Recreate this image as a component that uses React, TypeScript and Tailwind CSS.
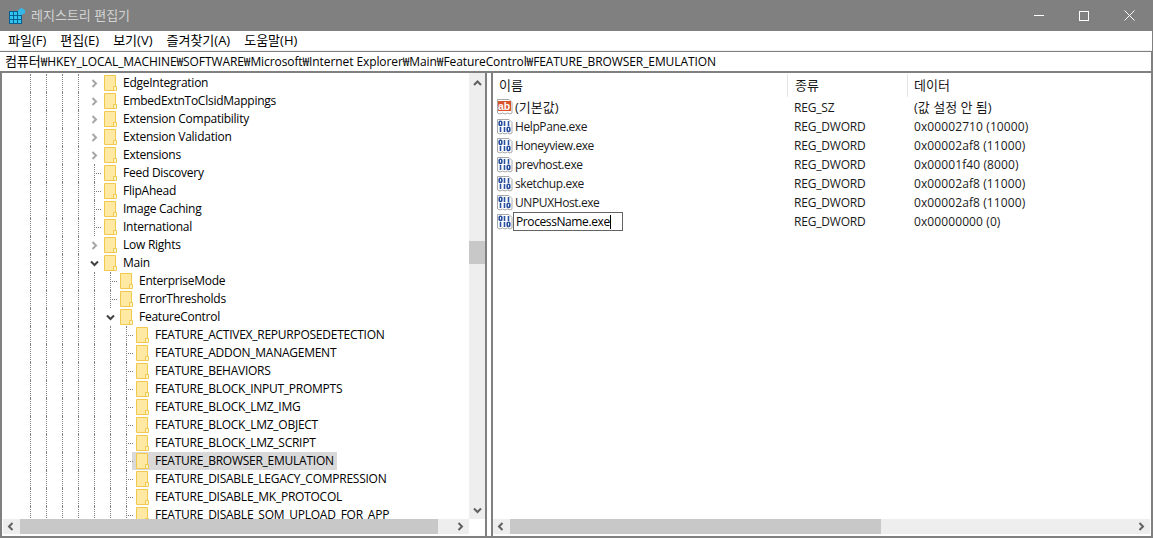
const UI = 'font-["Open_Sans","Noto_Sans_CJK_KR",sans-serif]';

type Node = {
  name: string;
  depth: number; // how many guide columns sit left of the expander
  kind: 'closed' | 'open' | 'leaf';
  selected?: boolean;
};

const tree: Node[] = [
  { name: 'EdgeIntegration', depth: 4, kind: 'closed' },
  { name: 'EmbedExtnToClsidMappings', depth: 4, kind: 'closed' },
  { name: 'Extension Compatibility', depth: 4, kind: 'closed' },
  { name: 'Extension Validation', depth: 4, kind: 'closed' },
  { name: 'Extensions', depth: 4, kind: 'closed' },
  { name: 'Feed Discovery', depth: 4, kind: 'leaf' },
  { name: 'FlipAhead', depth: 4, kind: 'leaf' },
  { name: 'Image Caching', depth: 4, kind: 'leaf' },
  { name: 'International', depth: 4, kind: 'leaf' },
  { name: 'Low Rights', depth: 4, kind: 'closed' },
  { name: 'Main', depth: 4, kind: 'open' },
  { name: 'EnterpriseMode', depth: 5, kind: 'leaf' },
  { name: 'ErrorThresholds', depth: 5, kind: 'leaf' },
  { name: 'FeatureControl', depth: 5, kind: 'open' },
  { name: 'FEATURE_ACTIVEX_REPURPOSEDETECTION', depth: 6, kind: 'leaf' },
  { name: 'FEATURE_ADDON_MANAGEMENT', depth: 6, kind: 'leaf' },
  { name: 'FEATURE_BEHAVIORS', depth: 6, kind: 'leaf' },
  { name: 'FEATURE_BLOCK_INPUT_PROMPTS', depth: 6, kind: 'leaf' },
  { name: 'FEATURE_BLOCK_LMZ_IMG', depth: 6, kind: 'leaf' },
  { name: 'FEATURE_BLOCK_LMZ_OBJECT', depth: 6, kind: 'leaf' },
  { name: 'FEATURE_BLOCK_LMZ_SCRIPT', depth: 6, kind: 'leaf' },
  { name: 'FEATURE_BROWSER_EMULATION', depth: 6, kind: 'leaf', selected: true },
  { name: 'FEATURE_DISABLE_LEGACY_COMPRESSION', depth: 6, kind: 'leaf' },
  { name: 'FEATURE_DISABLE_MK_PROTOCOL', depth: 6, kind: 'leaf' },
  { name: 'FEATURE_DISABLE_SOM_UPLOAD_FOR_APP', depth: 6, kind: 'leaf' },
];

const values = [
  { name: '(기본값)', type: 'REG_SZ', data: '(값 설정 안 됨)', icon: 'sz' },
  { name: 'HelpPane.exe', type: 'REG_DWORD', data: '0x00002710 (10000)', icon: 'bin' },
  { name: 'Honeyview.exe', type: 'REG_DWORD', data: '0x00002af8 (11000)', icon: 'bin' },
  { name: 'prevhost.exe', type: 'REG_DWORD', data: '0x00001f40 (8000)', icon: 'bin' },
  { name: 'sketchup.exe', type: 'REG_DWORD', data: '0x00002af8 (11000)', icon: 'bin' },
  { name: 'UNPUXHost.exe', type: 'REG_DWORD', data: '0x00002af8 (11000)', icon: 'bin' },
];

function Folder() {
  return (
    <svg width="13" height="16" viewBox="0 0 13 16" className="shrink-0">
      <path d="M.5.5h11v15H.5z" fill="#ffe9a3" stroke="#f2c94f" />
      <path d="M9.5 15.5v-4h3v4z" fill="#fff3c8" stroke="#f2c94f" />
    </svg>
  );
}

function Chevron({ dir, color }: { dir: 'left' | 'right' | 'up' | 'down'; color: string }) {
  const d = {
    left: 'M6.5 2 3 5.5 6.5 9',
    right: 'M3.5 2 7 5.5 3.5 9',
    up: 'M2 7 5.5 3.5 9 7',
    down: 'M2 3.5 5.5 7 9 3.5',
  }[dir];
  return (
    <svg width="11" height="11" viewBox="0 0 11 11">
      <path d={d} fill="none" stroke={color} strokeWidth="2" />
    </svg>
  );
}

function Guide() {
  return (
    <div className="w-4 h-full shrink-0 flex justify-center">
      <div className="h-full border-l border-dotted border-[#808080]" />
    </div>
  );
}

function TreeRow({ node }: { node: Node }) {
  return (
    <div className="h-[18px] flex items-center pl-[20px] whitespace-nowrap">
      {Array.from({ length: node.depth }).map((_, i) => (
        <Guide key={i} />
      ))}
      <div className="relative w-4 h-full shrink-0 flex items-center justify-center">
        {node.kind === 'closed' && <Chevron dir="right" color="#a6a6a6" />}
        {node.kind === 'open' && <Chevron dir="down" color="#404040" />}
        {node.kind === 'leaf' && (
          <>
            <div className="absolute left-2 top-0 h-full border-l border-dotted border-[#808080]" />
            <div className="absolute left-2 top-[9px] w-[7px] border-t border-dotted border-[#808080]" />
          </>
        )}
      </div>
      <div
        className={
          node.selected
            ? 'flex items-center h-full -ml-[2px] pl-[4px] pr-[3px] bg-[#d9d9d9]'
            : 'flex items-center h-full pl-[2px] pr-1'
        }
      >
        <Folder />
        <span className="ml-[6px] text-black tracking-[-0.25px]">{node.name}</span>
      </div>
    </div>
  );
}

function RegIcon({ kind }: { kind: string }) {
  return (
    <svg width="16" height="16" viewBox="0 0 16 16" className="shrink-0">
      <path d="M.5.5h11.5l3 3v10.5l-2 1-2.5-1-2.5 1-2.5-1-2.5 1-2.5-1z" fill="#fff" stroke="#a9a9a9" />
      {kind === 'sz' ? (
        <>
          <rect x="1" y="2" width="13" height="10" fill="#d9532c" />
          <text x="1" y="10.5" fontSize="10.5" fontWeight="700" fill="#fff" fontFamily="Liberation Sans, sans-serif">ab</text>
        </>
      ) : (
        <g fill="none" stroke="#28509f" strokeWidth="1.6">
          <rect x="2.2" y="2.2" width="2.6" height="4.2" rx="1" />
          <path d="M7.5 2v5" />
          <path d="M11.5 2v5" />
          <path d="M3.5 8v5" />
          <path d="M7.5 8v5" />
          <rect x="10.2" y="8.2" width="2.6" height="4.2" rx="1" />
        </g>
      )}
    </svg>
  );
}

function HScrollbar({ width }: { width: string }) {
  return (
    <div className="h-[15px] flex-1 flex bg-[#eeeeee]">
      <div className="w-[17px] flex items-center justify-center shrink-0">
        <Chevron dir="left" color="#606060" />
      </div>
      <div className={'h-full bg-[#c8c8c8] shrink-0 ' + width} />
      <div className="flex-1" />
      <div className="w-[17px] flex items-center justify-center shrink-0">
        <Chevron dir="right" color="#606060" />
      </div>
    </div>
  );
}

export default function App() {
  return (
    <div className={'w-[1153px] h-[538px] bg-[#808080] flex flex-col overflow-hidden text-xs text-[#1a1a1a] ' + UI}>
      {/* title bar */}
      <div className="h-[31px] shrink-0 flex items-center pl-[9px] text-[#d4d4d4]">
        <svg width="16" height="16" viewBox="0 0 16 16" className="shrink-0">
          <rect x="0" y="3" width="13" height="13" fill="#0b5f8f" />
          <path d="M1 4h3v3H1zM5 4h3v3H5zM9 4h3v3H9zM1 8h3v3H1zM5 8h3v3H5zM9 8h3v3H9zM1 12h3v3H1zM5 12h3v3H5zM9 12h3v3H9z" fill="#2ec4f0" />
          <path d="M12.5 0 16 2v3l-3.5 2L9 5V2z" fill="#35b8e8" />
        </svg>
        <span className="ml-[6px] text-[13px]">레지스트리 편집기</span>
        <div className="ml-auto flex h-full text-white">
          <div className="w-[45px] flex items-center justify-center">
            <div className="w-[10px] border-t border-white" />
          </div>
          <div className="w-[45px] flex items-center justify-center">
            <div className="w-[10px] h-[10px] border border-white" />
          </div>
          <div className="w-[47px] flex items-center justify-center">
            <svg width="11" height="11" viewBox="0 0 11 11">
              <path d="M.5.5l10 10M10.5.5l-10 10" stroke="#fff" fill="none" />
            </svg>
          </div>
        </div>
      </div>

      {/* menu */}
      <div className="h-[19px] shrink-0 bg-white flex items-center pl-[1px] mr-[1px] text-black text-[13px]">
        {['파일(F)', '편집(E)', '보기(V)', '즐겨찾기(A)', '도움말(H)'].map(m => (
          <span key={m} className="px-[7px]">{m}</span>
        ))}
      </div>
      <div className="h-[1px] shrink-0 bg-[#f0f0f0] mr-[1px]" />

      {/* address */}
      <div className="h-[19px] shrink-0 bg-white flex items-center pl-[5px] mr-[2px] mt-[1px] text-black whitespace-nowrap tracking-[-0.09px]">
        <span className="text-[13px]">컴퓨터</span>₩HKEY_LOCAL_MACHINE₩SOFTWARE₩Microsoft₩Internet Explorer₩Main₩FeatureControl₩FEATURE_BROWSER_EMULATION
      </div>

      {/* panes */}
      <div className="flex-1 min-h-0 flex mt-[2px] mb-[2px] pl-[2px] pr-[2px]">
        {/* tree pane */}
        <div className="w-[483px] shrink-0 bg-white flex flex-col">
          <div className="flex-1 min-h-0 flex">
            <div className="flex-1 overflow-hidden pt-[1px]">
              {tree.map(n => (
                <TreeRow key={n.name} node={n} />
              ))}
            </div>
            <div className="w-4 shrink-0 bg-[#eeeeee] flex flex-col">
              <div className="h-5 flex items-center justify-center">
                <Chevron dir="up" color="#606060" />
              </div>
              <div className="flex-1 pt-[148px]">
                <div className="h-[23px] bg-[#c8c8c8]" />
              </div>
              <div className="h-[17px] flex items-center justify-center">
                <Chevron dir="down" color="#606060" />
              </div>
            </div>
          </div>
          <div className="h-[17px] shrink-0 flex pl-[1px] pr-4">
            <HScrollbar width="w-[418px]" />
          </div>
        </div>

        {/* splitter */}
        <div className="w-[4px] shrink-0 ml-[2px] mr-[2px] bg-white" />

        {/* list pane */}
        <div className="flex-1 min-w-0 bg-white flex flex-col">
          <div className="h-[25px] shrink-0 pt-[1px] pb-[1px] flex text-[#1a1a1a] text-[13px]">
            <div className="w-[295px] pl-[6px] flex items-center border-r border-[#e5e5e5]">이름</div>
            <div className="w-[120px] pl-[7px] flex items-center border-r border-[#e5e5e5]">종류</div>
            <div className="pl-[6px] flex items-center">데이터</div>
          </div>
          <div className="flex-1 min-h-0">
            {values.map(v => (
              <div key={v.name} className="h-[19px] flex items-center">
                <div className="w-[295px] pl-[4px] flex items-center">
                  <RegIcon kind={v.icon} />
                  <span className={v.icon === 'sz' ? 'ml-[2px] text-[13px]' : 'ml-[2px] tracking-[-0.4px]'}>{v.name}</span>
                </div>
                <div className="w-[120px] pl-[6px] tracking-[-0.2px]">{v.type}</div>
                <div className={v.icon === 'sz' ? 'pl-[6px] text-[13px]' : 'pl-[6px] tracking-[0.1px]'}>{v.data}</div>
              </div>
            ))}
            <div className="h-[19px] flex items-center">
              <div className="w-[295px] pl-[4px] flex items-center">
                <RegIcon kind="bin" />
                <div className="h-[19px] w-[110px] pl-[2px] flex items-center border border-[#646464] bg-white text-black tracking-[-0.4px]">
                  ProcessName.exe
                  <span className="h-[14px] border-l border-black" />
                </div>
              </div>
              <div className="w-[120px] pl-[6px] tracking-[-0.2px]">REG_DWORD</div>
              <div className="pl-[6px] tracking-[0.1px]">0x00000000 (0)</div>
            </div>
          </div>
          <div className="h-[17px] shrink-0 flex pr-[1px]">
            <HScrollbar width="w-[371px]" />
          </div>
        </div>
      </div>
    </div>
  );
}
